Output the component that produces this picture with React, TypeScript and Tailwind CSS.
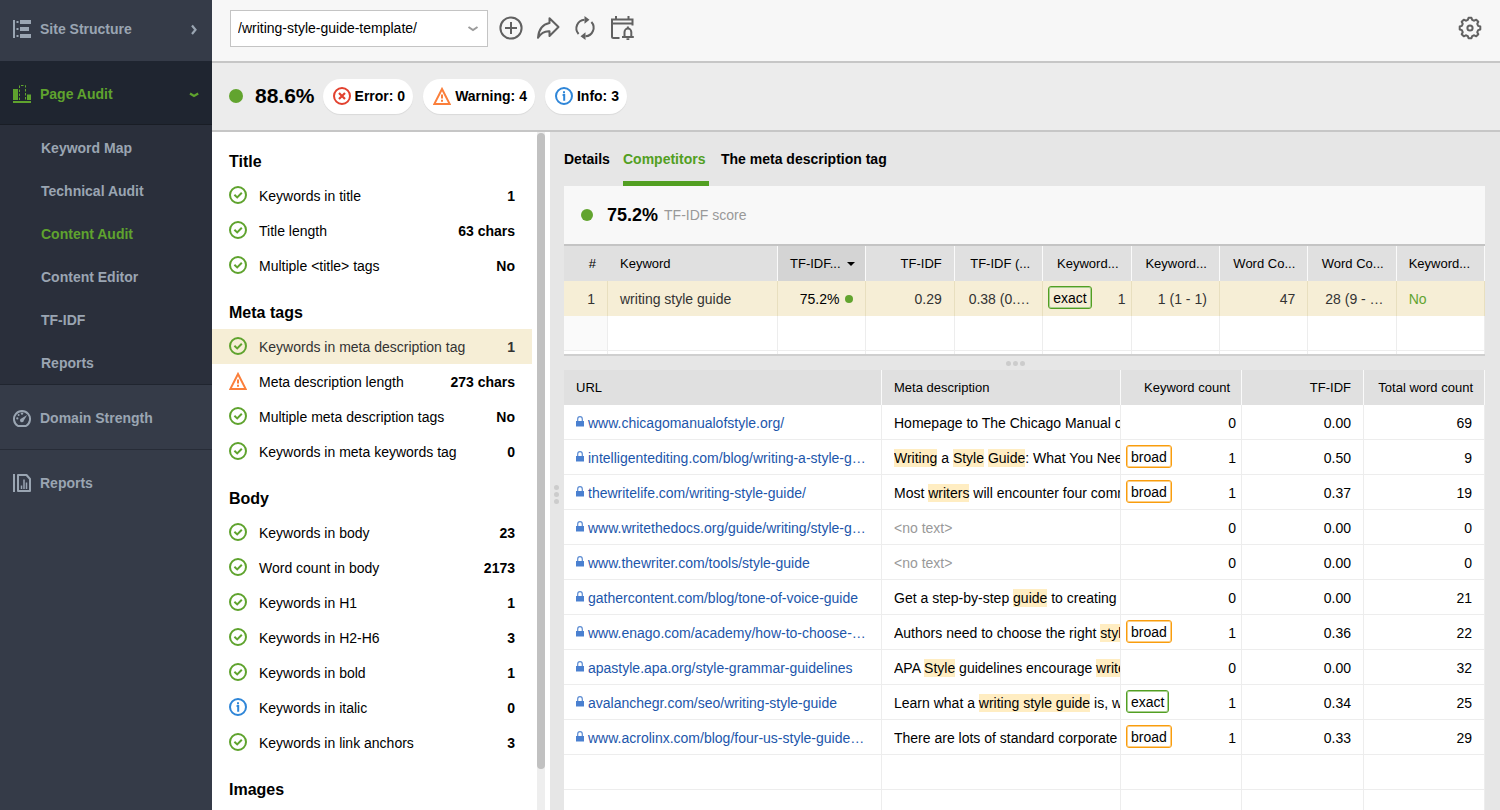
import React from "react";

type Status = "ok" | "warning" | "info" | "error";

function StatusIcon({ status }: { status: Status }) {
  if (status === "warning") {
    return (
      <svg className="size-[18px] shrink-0" viewBox="0 0 18 18" fill="none" aria-hidden="true">
        <path d="M9 2 L16.6 16.9 H1.4 Z" stroke="#fb7f3b" strokeWidth="2" strokeLinejoin="miter" />
        <path d="M9 7.5 V11.4 M9 12.8 V14.8" stroke="#fb7f3b" strokeWidth="2" />
      </svg>
    );
  }
  const colour = status === "ok" ? "#5fa32e" : status === "info" ? "#2f86d8" : "#e2412f";
  return (
    <svg className="size-[18px] shrink-0" viewBox="0 0 18 18" fill="none" stroke={colour} aria-hidden="true">
      <circle cx="9" cy="9" r="8" strokeWidth="2" />
      {status === "ok" && <path d="M5.4 8.8 L8.2 11.4 L12.8 6.8" strokeWidth="2" />}
      {status === "info" && <path d="M9 4.2 V6.2 M7.6 8 H9 M9.200 7.1 V13.8" strokeWidth="2" />}
      {status === "error" && <path d="M6 6 L12 12 M12 6 L6 12" strokeWidth="2.2" />}
    </svg>
  );
}

function Dot({ className }: { className: string }) {
  return <span className={`inline-block shrink-0 rounded-full bg-[#62a42f] ${className}`} />;
}

/* ---------- Sidebar ---------- */

function StructureIcon() {
  return (
    <svg className="size-[18px]" viewBox="0 0 18 18" fill="currentColor" aria-hidden="true">
      <path d="M0 0h2v18H0zM7 0h11v4H7zM7 7h9v4H7zM7 14h11v4H7z" />
      <path d="M3.5 1h2v2h-2zM3.5 8h2v2h-2zM3.5 15h2v2h-2z" />
    </svg>
  );
}

function AuditIcon() {
  return (
    <svg className="size-[18px]" viewBox="0 0 18 18" fill="currentColor" aria-hidden="true">
      <path d="M0 4h5v11H0zM14 9.500h4V15h-4zM0 16h18v2H0z" />
      <path d="M6.500 15V.500h6V15" fill="none" stroke="currentColor" strokeDasharray="2.5 1.500" />
    </svg>
  );
}

function GaugeIcon() {
  return (
    <svg className="size-[18px]" viewBox="0 0 18 18" fill="currentColor" aria-hidden="true">
      <path
        d="M5 17 A8 8 0 1 1 13 17 Z"
        fill="none"
        stroke="currentColor"
        strokeWidth="2"
        strokeLinejoin="round"
      />
      <path d="M14.200 6 L10.800 11.400 A1.900 1.900 0 1 1 8.300 9.600 Z" />
      <circle cx="9" cy="4.600" r="1.200" />
      <circle cx="5.600" cy="6" r="1" />
      <circle cx="4.300" cy="9.400" r="1.100" />
    </svg>
  );
}

function ReportIcon() {
  return (
    <svg className="size-[18px]" viewBox="0 0 18 18" fill="none" stroke="currentColor" aria-hidden="true">
      <path d="M1 0v18" strokeWidth="2" />
      <path d="M5 1h8.500l3.500 4v12H5z" strokeWidth="2" strokeLinejoin="round" />
      <path d="M8.500 11.500V15M11 5.500V15M13.500 8.500V15" strokeWidth="1.500" />
    </svg>
  );
}

function MainItem({
  icon,
  label,
  className,
  chevron,
}: {
  icon: React.ReactNode;
  label: string;
  className: string;
  chevron?: "right" | "down";
}) {
  return (
    <a href="#" className={`flex items-center gap-[9px] pr-3 pl-[13px] ${className}`}>
      {icon}
      <span className="flex-1">{label}</span>
      {chevron && (
        <svg className="size-3" viewBox="0 0 12 12" fill="none" stroke="currentColor" strokeWidth="2.200" aria-hidden="true">
          <path d={chevron === "right" ? "M4 2.500 L7.500 6.800 L4 11" : "M2 5.500 L6 8 L10.200 5.500"} />
        </svg>
      )}
    </a>
  );
}

const subItems = ["Keyword Map", "Technical Audit", "Content Audit", "Content Editor", "TF-IDF", "Reports"];

function Sidebar() {
  return (
    <nav className="w-[212px] shrink-0 bg-[#353b48] text-sm leading-5 font-bold text-[#9aa5b2]">
      <MainItem icon={<StructureIcon />} label="Site Structure" chevron="right" className="h-[61px] pb-1" />
      <MainItem
        icon={<AuditIcon />}
        label="Page Audit"
        chevron="down"
        className="h-16 border-b border-[#191d25] bg-[#1f2530] pt-0.5 text-[#5fa32e]"
      />
      <ul className="border-b border-[#20252f] bg-[#2a2f3b] pt-px">
        {subItems.map((item) => (
          <li key={item}>
            <a
              href="#"
              className={`flex h-[43px] items-center pl-[41px] ${item === "Content Audit" ? "text-[#5fa32e]" : ""}`}
            >
              {item}
            </a>
          </li>
        ))}
      </ul>
      <MainItem icon={<GaugeIcon />} label="Domain Strength" className="h-[65px] border-b border-[#272c37] pt-0.5" />
      <MainItem icon={<ReportIcon />} label="Reports" className="h-[65px]" />
    </nav>
  );
}

/* ---------- Toolbar ---------- */

function gearPath() {
  const points: string[] = [];
  for (let i = 0; i < 8; i++) {
    const base = (i * Math.PI) / 4;
    const spots: [number, number][] = [
      [-0.26, 8.4],
      [-0.14, 10.4],
      [0.14, 10.4],
      [0.26, 8.4],
    ];
    for (const [offset, radius] of spots) {
      const x = 12 + radius * Math.sin(base + offset);
      const y = 12 - radius * Math.cos(base + offset);
      points.push(`${x.toFixed(2)} ${y.toFixed(2)}`);
    }
  }
  return `M${points.join("L")}Z`;
}

function ToolButton({ label, children }: { label: string; children: React.ReactNode }) {
  return (
    <button type="button" aria-label={label} className="text-[#616161]">
      <svg
        className="size-6"
        viewBox="0 0 24 24"
        fill="none"
        stroke="currentColor"
        strokeWidth="2"
        aria-hidden="true"
      >
        {children}
      </svg>
    </button>
  );
}

function Toolbar() {
  return (
    <header className="flex h-[63px] items-center border-b-2 border-[#c6c6c6] bg-[#f7f7f7] pr-[18px] pb-[5px] pl-[18px]">
      <div className="relative w-[258px]">
        <select
          aria-label="Page"
          className="h-[37px] w-full appearance-none border border-[#c4c4c4] bg-white px-[7px] text-sm text-black"
        >
          <option>/writing-style-guide-template/</option>
        </select>
        <svg
          className="pointer-events-none absolute top-3 right-[9px] size-3"
          viewBox="0 0 12 12"
          fill="none"
          stroke="#9b9b9b"
          strokeWidth="2"
          aria-hidden="true"
        >
          <path d="M1.500 5 L6 8 L10.500 5" />
        </svg>
      </div>
      <div className="ml-[11px] flex flex-1 items-center gap-[13px]">
        <ToolButton label="Add page">
          <circle cx="12" cy="12" r="10.600" />
          <path d="M12 6v12M6 12h12" />
        </ToolButton>
        <ToolButton label="Share">
          <path
            d="M13.500 2.200 L22.500 11 L13.500 20 V15.200 C8.500 14.800 5 17 2 21.800 C2.600 14 6.500 8.300 13.500 7 Z"
            strokeLinejoin="round"
          />
        </ToolButton>
        <ToolButton label="Refresh">
          <path d="M5.600 18 A8.600 8.600 0 0 1 11.500 3.700" />
          <path d="M18.400 6 A8.600 8.600 0 0 1 12.500 20.300" />
          <path d="M11.500 0 L16.500 3.700 L11.500 7.800 Z M12.500 16.200 L7.500 20.300 L12.500 24 Z" fill="currentColor" stroke="none" />
        </ToolButton>
        <ToolButton label="Schedule">
          <path d="M9.500 22 H3.500 Q2 22 2 20.500 V3.500 H22.500 V9.500 M2 7.500 H22.500 M6 0 V4 M18.500 0 V4" />
          <path d="M12 21 H23.800 M14.500 21 V16 A3.400 3.400 0 0 1 21.300 16 V21 M16.500 23.300 H19.300 M17.900 10.500 V12.500" />
        </ToolButton>
      </div>
      <ToolButton label="Settings">
        <path d={gearPath()} strokeLinejoin="round" />
        <circle cx="12" cy="12" r="2.600" />
      </ToolButton>
    </header>
  );
}

function Pill({ status, text }: { status: Status; text: string }) {
  return (
    <button
      type="button"
      className="flex h-[35px] items-center gap-1 rounded-full bg-white pr-2 pl-2.5 text-sm font-bold shadow-[0_1px_1px_rgba(0,0,0,0.08)]"
    >
      <StatusIcon status={status} />
      {text}
    </button>
  );
}

/* ---------- Factor list ---------- */

type Factor = [Status, string, string];

const sections: { title: string; rows: Factor[] }[] = [
  {
    title: "Title",
    rows: [
      ["ok", "Keywords in title", "1"],
      ["ok", "Title length", "63 chars"],
      ["ok", "Multiple <title> tags", "No"],
    ],
  },
  {
    title: "Meta tags",
    rows: [
      ["ok", "Keywords in meta description tag", "1"],
      ["warning", "Meta description length", "273 chars"],
      ["ok", "Multiple meta description tags", "No"],
      ["ok", "Keywords in meta keywords tag", "0"],
    ],
  },
  {
    title: "Body",
    rows: [
      ["ok", "Keywords in body", "23"],
      ["ok", "Word count in body", "2173"],
      ["ok", "Keywords in H1", "1"],
      ["ok", "Keywords in H2-H6", "3"],
      ["ok", "Keywords in bold", "1"],
      ["info", "Keywords in italic", "0"],
      ["ok", "Keywords in link anchors", "3"],
    ],
  },
  { title: "Images", rows: [] },
];

function FactorList() {
  return (
    <div className="flex w-[338px] shrink-0 overflow-hidden bg-white pr-[5px]">
      <div className="mr-[5px] flex-1">
        {sections.map((section) => (
          <section key={section.title}>
            <h2 className="flex h-[46px] items-end pb-1.5 pl-[17px] text-base leading-5 font-bold">{section.title}</h2>
            {section.rows.map(([status, label, value]) => {
              const selected = label === "Keywords in meta description tag";
              return (
                <button
                  key={label}
                  type="button"
                  className={`flex h-[35px] w-full items-center pr-[17px] pb-px pl-[17px] text-left text-sm ${
                    selected ? "bg-[#f6eed6] text-[#333333]" : ""
                  }`}
                >
                  <StatusIcon status={status} />
                  <span className="flex-1 pt-0.5 pl-3">{label}</span>
                  <span className="pt-0.5 font-bold">{value}</span>
                </button>
              );
            })}
          </section>
        ))}
      </div>
      <div className="w-2 bg-[#eeeeee] pt-px">
        <div className="h-[94%] rounded-full bg-[#c1c1c1]" />
      </div>
    </div>
  );
}

/* ---------- Tables ---------- */

function MatchTag({ kind }: { kind: "exact" | "broad" }) {
  return (
    <span
      className={`mb-0.5 flex h-[23px] items-center rounded-[3px] border px-1 text-sm text-black ${
        kind === "exact"
          ? "border-[#529f22] shadow-[inset_0_0_0_1px_#a9cf90]"
          : "border-[#f99d0d] shadow-[inset_0_0_0_1px_#fcce86]"
      }`}
    >
      {kind}
    </span>
  );
}

const scoreHeaders = ["TF-IDF", "TF-IDF (...", "Keyword...", "Keyword...", "Word Co...", "Word Co..."];

function ScoreTable() {
  const head = "border-r border-[#fafafa] px-3 text-right font-normal";
  const cell = "border-r border-[#e8dfbf] px-3 text-right";
  const blank = "border-r border-[#ededed]";
  return (
    <table className="w-full table-fixed border-separate border-spacing-0 whitespace-nowrap">
      <colgroup>
        <col className="w-11" />
        <col className="w-[170px]" />
        <col span={8} />
      </colgroup>
      <thead className="bg-[#e0e0e0] text-[13px]">
        <tr className="h-[35px]">
          <th className="pr-3 text-right font-normal">#</th>
          <th className="border-r border-[#fafafa] px-3 text-left font-normal">Keyword</th>
          <th className="border-r border-[#fafafa] bg-[#d4d4d4] pr-2.5 pl-3 font-normal">
            <span className="flex items-center justify-between">
              TF-IDF...
              <svg className="h-1 w-2" viewBox="0 0 8 4" aria-hidden="true">
                <path d="M0 0h8L4 4z" />
              </svg>
            </span>
          </th>
          {scoreHeaders.map((text, i) => (
            <th key={i} className={head}>
              {text}
            </th>
          ))}
          <th className="border-r border-[#fafafa] px-3 text-left font-normal">Keyword...</th>
        </tr>
      </thead>
      <tbody className="text-sm">
        <tr className="h-[35px] bg-[#f6eed6] text-[#333333]">
          <td className={cell}>1</td>
          <td className="border-r border-[#e8dfbf] px-3">writing style guide</td>
          <td className="border-r border-[#e8dfbf] pr-3 text-black">
            <span className="flex items-center justify-end gap-1.5">
              75.2% <Dot className="size-2" />
            </span>
          </td>
          <td className={cell}>0.29</td>
          <td className={cell}>0.38 (0.…</td>
          <td className="border-r border-[#e8dfbf] pr-[5px] pl-[5px]">
            <span className="flex items-center justify-between">
              <MatchTag kind="exact" />1
            </span>
          </td>
          <td className={cell}>1 (1 - 1)</td>
          <td className={cell}>47</td>
          <td className={cell}>28 (9 - …</td>
          <td className="border-r border-[#e8dfbf] px-3 text-[#62a42f]">No</td>
        </tr>
        <tr className="h-[35px]">
          {Array.from({ length: 10 }, (_, i) => (
            <td key={i} className={`border-b ${blank} ${i === 0 ? "bg-[#fafafa]" : ""}`} />
          ))}
        </tr>
        <tr className="h-[3px]">
          {Array.from({ length: 10 }, (_, i) => (
            <td key={i} className={`p-0 ${blank}`} />
          ))}
        </tr>
      </tbody>
    </table>
  );
}

function Mark({ children }: { children: React.ReactNode }) {
  return <mark className="bg-[#ffedc2] py-px text-black">{children}</mark>;
}

interface Competitor {
  url: string;
  description: React.ReactNode;
  tag?: "exact" | "broad";
  count: string;
  score: string;
  words: string;
}

const noText = <span className="text-[#999999]">&lt;no text&gt;</span>;

const competitors: Competitor[] = [
  {
    url: "www.chicagomanualofstyle.org/",
    description: "Homepage to The Chicago Manual of",
    count: "0",
    score: "0.00",
    words: "69",
  },
  {
    url: "intelligentediting.com/blog/writing-a-style-g…",
    description: (
      <>
        <Mark>Writing</Mark> a <Mark>Style</Mark> <Mark>Guide</Mark>: What You Need
      </>
    ),
    tag: "broad",
    count: "1",
    score: "0.50",
    words: "9",
  },
  {
    url: "thewritelife.com/writing-style-guide/",
    description: (
      <>
        Most <Mark>writers</Mark> will encounter four common
      </>
    ),
    tag: "broad",
    count: "1",
    score: "0.37",
    words: "19",
  },
  { url: "www.writethedocs.org/guide/writing/style-g…", description: noText, count: "0", score: "0.00", words: "0" },
  { url: "www.thewriter.com/tools/style-guide", description: noText, count: "0", score: "0.00", words: "0" },
  {
    url: "gathercontent.com/blog/tone-of-voice-guide",
    description: (
      <>
        Get a step-by-step <Mark>guide</Mark> to creating
      </>
    ),
    count: "0",
    score: "0.00",
    words: "21",
  },
  {
    url: "www.enago.com/academy/how-to-choose-…",
    description: (
      <>
        Authors need to choose the right <Mark>style</Mark>
      </>
    ),
    tag: "broad",
    count: "1",
    score: "0.36",
    words: "22",
  },
  {
    url: "apastyle.apa.org/style-grammar-guidelines",
    description: (
      <>
        APA <Mark>Style</Mark> guidelines encourage <Mark>writers</Mark>
      </>
    ),
    count: "0",
    score: "0.00",
    words: "32",
  },
  {
    url: "avalanchegr.com/seo/writing-style-guide",
    description: (
      <>
        Learn what a <Mark>writing style guide</Mark> is, why
      </>
    ),
    tag: "exact",
    count: "1",
    score: "0.34",
    words: "25",
  },
  {
    url: "www.acrolinx.com/blog/four-us-style-guide…",
    description: "There are lots of standard corporate",
    tag: "broad",
    count: "1",
    score: "0.33",
    words: "29",
  },
];

function LockIcon() {
  return (
    <svg className="mb-0.5 h-[11px] w-2 shrink-0" viewBox="0 0 8 11" fill="none" aria-hidden="true">
      <path d="M1.700 5V3a2.300 2.300 0 0 1 4.600 0v2" stroke="#5b8bd2" strokeWidth="1.200" />
      <path d="M0 5h8v5.500H0z" fill="#4a80d0" />
    </svg>
  );
}

function CompetitorTable() {
  const head = "border-r border-[#fafafa] px-3 text-right font-normal";
  const cell = "border-r border-b border-[#ededed] px-3 pt-px";
  return (
    <table className="w-full table-fixed border-separate border-spacing-0 bg-white whitespace-nowrap">
      <colgroup>
        <col className="w-[318px]" />
        <col />
        <col className="w-[121px]" />
        <col className="w-[122px]" />
        <col className="w-[121px]" />
      </colgroup>
      <thead className="bg-[#e0e0e0] text-[13px]">
        <tr className="h-[35px]">
          <th className="border-r border-[#fafafa] px-3 text-left font-normal">URL</th>
          <th className="border-r border-[#fafafa] px-3 text-left font-normal">Meta description</th>
          <th className="border-r border-[#fafafa] pr-[11px] text-right font-normal">Keyword count</th>
          <th className={head}>TF-IDF</th>
          <th className="border-r border-[#fafafa] pr-[11px] text-right font-normal">Total word count</th>
        </tr>
      </thead>
      <tbody className="text-sm">
        {competitors.map((row) => (
          <tr key={row.url} className="h-[35px]">
            <td className={`${cell} overflow-hidden`}>
              <a href="#" className="flex items-center gap-1 text-[#1c56ab]">
                <LockIcon />
                {row.url}
              </a>
            </td>
            <td className="border-r border-b border-[#ededed] pt-px pl-3">
              <div className="overflow-hidden">{row.description}</div>
            </td>
            <td className="border-r border-b border-[#ededed] px-[5px] pt-px">
              <span className="flex items-center justify-end">
                {row.tag && (
                  <span className="mr-auto">
                    <MatchTag kind={row.tag} />
                  </span>
                )}
                {row.count}
              </span>
            </td>
            <td className={`${cell} text-right`}>{row.score}</td>
            <td className={`${cell} text-right`}>{row.words}</td>
          </tr>
        ))}
        {[0, 1].map((n) => (
          <tr key={n} className="h-[35px]">
            {[0, 1, 2, 3, 4].map((c) => (
              <td key={c} className="border-r border-b border-[#ededed]" />
            ))}
          </tr>
        ))}
      </tbody>
    </table>
  );
}

const tabs = [
  { label: "Details", width: "min-w-[47px]" },
  { label: "Competitors", width: "min-w-[86px]" },
  { label: "The meta description tag", width: "min-w-[173px]" },
];

export default function App() {
  return (
    <div className="flex h-screen overflow-hidden bg-[#e6e6e6] font-['Liberation_Sans',Arial,sans-serif] text-black">
      <Sidebar />
      <div className="flex min-w-0 flex-1 flex-col">
        <Toolbar />
        <div className="flex h-[69px] shrink-0 items-center gap-2 border-b-2 border-[#c6c6c6] bg-[#ececec] pb-px pl-[17px]">
          <div className="flex items-center gap-3 text-[21px] font-bold">
            <Dot className="size-3.5" />
            88.6%
          </div>
          <div className="flex items-center gap-2.5">
            <Pill status="error" text="Error: 0" />
            <Pill status="warning" text="Warning: 4" />
            <Pill status="info" text="Info: 3" />
          </div>
        </div>
        <div className="flex min-h-0 flex-1">
          <FactorList />
          <div className="flex w-3.5 shrink-0 flex-col items-center justify-center gap-0.5 pt-[46px] pr-px">
            <span className="size-[5px] rounded-full bg-[#cccccc]" />
            <span className="size-[5px] rounded-full bg-[#cccccc]" />
            <span className="size-[5px] rounded-full bg-[#cccccc]" />
          </div>
          <main className="min-w-0 flex-1 overflow-hidden pr-[15px]">
            <div className="flex h-[54px] gap-3 text-sm font-bold">
              {tabs.map((tab) => (
                <button
                  key={tab.label}
                  type="button"
                  className={`border-b-[5px] pt-1 text-left ${tab.width} ${
                    tab.label === "Competitors" ? "border-[#529f22] text-[#529f22]" : "border-transparent"
                  }`}
                >
                  {tab.label}
                </button>
              ))}
            </div>
            <div className="flex h-[60px] items-center border-b-2 border-[#c4c4c4] bg-[#f8f8f8] pl-[17px]">
              <Dot className="size-3" />
              <span className="ml-3.5 text-lg font-bold">75.2%</span>
              <span className="ml-1.5 text-sm text-[#999999]">TF-IDF score</span>
            </div>
            <div className="border-b-2 border-[#cfcfcf] bg-white">
              <ScoreTable />
            </div>
            <div className="flex h-3.5 items-center justify-center gap-0.5 pr-[18px]">
              <span className="size-[5px] rounded-full bg-[#cccccc]" />
              <span className="size-[5px] rounded-full bg-[#cccccc]" />
              <span className="size-[5px] rounded-full bg-[#cccccc]" />
            </div>
            <CompetitorTable />
          </main>
        </div>
      </div>
    </div>
  );
}
